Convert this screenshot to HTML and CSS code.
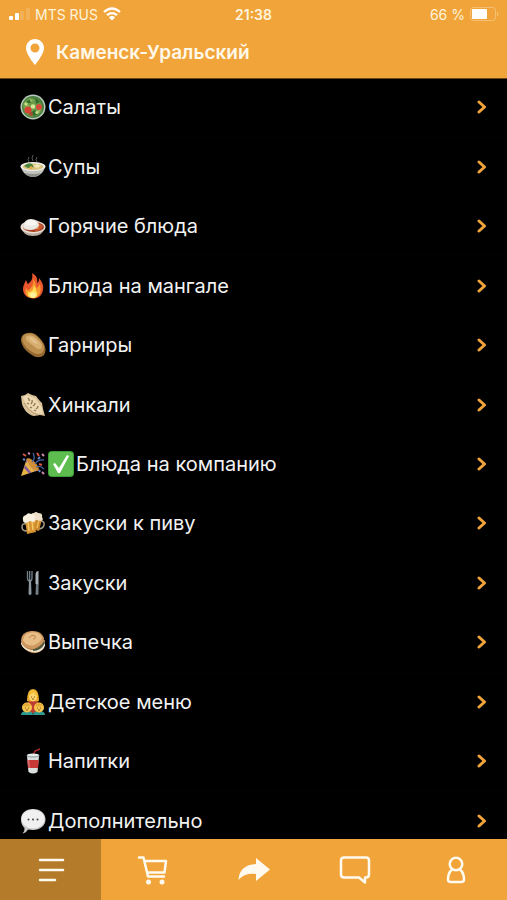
FILE: index.html
```html
<!DOCTYPE html>
<html lang="ru">
<head>
    <meta charset="UTF-8">
    <meta name="viewport" content="width=device-width, initial-scale=1.0">
    <title>Меню</title>
    <link rel="stylesheet" href="styles.css">
</head>
<body>

    <header class="header">
        <div class="status-bar">
            <div class="status-left">
                <svg class="signal-icon" viewBox="0 0 22 12">
                    <rect x="1" y="8" width="4" height="4" rx="1"></rect>
                    <rect x="7" y="5" width="4" height="7" rx="1"></rect>
                    <rect x="12" y="3" width="4" height="9" rx="1" opacity=".15"></rect>
                    <rect x="18" y="0" width="4" height="12" rx="1" opacity=".15"></rect>
                </svg>
                <span>MTS RUS</span>
                <svg class="wifi-icon" viewBox="0 0 18 14">
                    <path d="M1 5Q9-2 17 5M4 8.200Q9 4 14 8.200" fill="none" stroke="#fff" stroke-width="2.300"></path>
                    <path d="M5.800 10.300Q9 7.800 12.200 10.300L9 13.600z"></path>
                </svg>
            </div>
            <div class="status-time">21:38</div>
            <div class="status-right">
                <span>66 %</span>
                <svg class="battery-icon" viewBox="0 0 29 14">
                    <rect x=".5" y=".5" width="25" height="13" rx="3" fill="none" stroke="#fff" opacity=".3"></rect>
                    <rect x="2" y="2" width="15" height="10" rx="1"></rect>
                    <path d="M27 4.500q3 2.500 0 5z" opacity=".35"></path>
                </svg>
            </div>
        </div>
        <button type="button" class="location">
            <svg class="pin-icon" viewBox="0 0 18 26">
                <path fill-rule="evenodd" d="M9 0C4 0 0 4 0 9c0 6.500 9 17 9 17s9-10.500 9-17c0-5-4-9-9-9zm0 4.500a4.500 4.500 0 1 1 0 9 4.500 4.500 0 0 1 0-9z"></path>
            </svg>
            <span>Каменск-Уральский</span>
        </button>
    </header>

    <main class="content">
        <ul class="menu-list">
            <li>
                <a href="#salads" class="menu-item">
                    <svg class="emoji" viewBox="0 0 26 26">
                        <circle cx="13" cy="13" r="12.500" fill="#b9c9bd"></circle>
                        <circle cx="13" cy="13" r="11" fill="#4c8040"></circle>
                        <path d="M3 10q5-8 11-5l5 2q5 5 2 11-5 6-12 4-6-3-6-12z" fill="#6c9c49"></path>
                        <path d="M5 9l5-4 2 4zM15 4l5 4-4 2zM10 19l5-3 4 4-5 2z" fill="#2f6f2d"></path>
                        <path d="M9 4l4 2-2 3zM4 14l4-3 3 3zM17 16l4-1-2 4z" fill="#96b65b"></path>
                        <circle cx="8" cy="16" r="3.500" fill="#d54335"></circle>
                        <circle cx="19" cy="13" r="3" fill="#d84b3b"></circle>
                        <circle cx="11" cy="20" r="2" fill="#a84a32"></circle>
                        <circle cx="13" cy="12.500" r="2.300" fill="#d4e795"></circle>
                        <circle cx="6" cy="10" r="1.800" fill="#c5dc83"></circle>
                        <circle cx="17" cy="18.500" r="1.700" fill="#bdd685"></circle>
                    </svg>
                    <span>Салаты</span>
                    <svg class="chevron" viewBox="0 0 10 14"><path d="M2 2l5.500 5L2 12"></path></svg>
                </a>
            </li>
            <li>
                <a href="#soups" class="menu-item">
                    <svg class="emoji" viewBox="0 0 26 26">
                        <path d="M9 8q-2-2 0-5M13 7q-2-3 0-6M17 8q-2-2 0-5" fill="none" stroke="#5a5854" stroke-width="1"></path>
                        <path d="M1 12.500C2 19 8 23 13 23s11-4 12-10.500z" fill="#c4c4bf"></path>
                        <path d="M5 19q8 2 16 0-3 4-8 4t-8-4z" fill="#8f918c"></path>
                        <ellipse cx="13" cy="12.500" rx="12.500" ry="4.500" fill="#eeeeea"></ellipse>
                        <ellipse cx="13" cy="12.800" rx="10.500" ry="3.200" fill="#d9c580"></ellipse>
                        <path d="M4 12q4-4 8-2l2 3-6 1z" fill="#49843d"></path>
                        <path d="M13 12l4-2 4 2-4 2z" fill="#f1e7b4"></path>
                        <circle cx="11" cy="13.500" r="1.500" fill="#e2a548"></circle>
                    </svg>
                    <span>Супы</span>
                    <svg class="chevron" viewBox="0 0 10 14"><path d="M2 2l5.500 5L2 12"></path></svg>
                </a>
            </li>
            <li>
                <a href="#hot" class="menu-item">
                    <svg class="emoji" viewBox="0 0 26 26">
                        <path d="M1 14q2 9 12 9t12-9z" fill="#b9aba0"></path>
                        <ellipse cx="13" cy="14" rx="12.500" ry="6.500" fill="#e7ddd4"></ellipse>
                        <ellipse cx="13.500" cy="14" rx="10.500" ry="5" fill="#a63e21"></ellipse>
                        <path d="M14 10q5-1 9 3-2 5-8 5z" fill="#c7582f"></path>
                        <path d="M17 11l3 1-2 2zM15 15l4-1-1 2z" fill="#ed9b55"></path>
                        <path d="M3 14Q4 6 11 6q7 0 8 6-2 5-9 5-6 0-7-3z" fill="#e9e8e2"></path>
                        <path d="M5 11q2-4 6-4 5 0 6 4-5 3-12 0z" fill="#f8f7f2"></path>
                    </svg>
                    <span>Горячие блюда</span>
                    <svg class="chevron" viewBox="0 0 10 14"><path d="M2 2l5.500 5L2 12"></path></svg>
                </a>
            </li>
            <li>
                <a href="#grill" class="menu-item">
                    <svg class="emoji" viewBox="0 0 26 26">
                        <path d="M12 0c5 3 6 6 5 10 2-1 2-3 2-5 3 4 5 7 4 12-1 6-5 8.500-10 8.500S3 22 3 16c0-4 2-6 3-9 1 2 1 3 2 4 4-3 5-6 4-11z" fill="#e8562e"></path>
                        <path d="M13 6c4 5 2 8 4 9l3-4c2 9-1 14-7 14s-9-4-7-10c1 2 2 2 3 2 3-3 5-6 4-11z" fill="#f7992f"></path>
                        <path d="M14 13c3 3 1 5 3 6 1 4-1 6-4 6s-6-2-5-6c2 1 6-2 6-6z" fill="#ffdf56"></path>
                        <ellipse cx="13" cy="22" rx="3" ry="2.500" fill="#fff3a3"></ellipse>
                    </svg>
                    <span>Блюда на мангале</span>
                    <svg class="chevron" viewBox="0 0 10 14"><path d="M2 2l5.500 5L2 12"></path></svg>
                </a>
            </li>
            <li>
                <a href="#sides" class="menu-item">
                    <svg class="emoji" viewBox="0 0 26 26">
                        <path d="M2 4C5 0 11 0 15 2c3 2 6 5 9 10 2 4 2 8 0 11-3 3-8 3-12 0C7 20 3 16 1.500 11 .5 8 1 6 2 4z" fill="#94682f"></path>
                        <path d="M3 4c3-3 8-3 12-1 3 2 6 5 8 9 2 4 1 7-1 9-3 2-7 1-10-1C7 17 4 13 2.500 9Q2 6 3 4z" fill="#bd904f"></path>
                        <path d="M6 5c4-3 8-1 11 2 3 2 5 5 5 8 0 3-4 3-7 0L7 9Q5 7 6 5z" fill="#d6ae70"></path>
                        <path d="M9 5q5 0 9 6-1 2-4 0Q9 8 9 5z" fill="#e2bf86"></path>
                    </svg>
                    <span>Гарниры</span>
                    <svg class="chevron" viewBox="0 0 10 14"><path d="M2 2l5.500 5L2 12"></path></svg>
                </a>
            </li>
            <li>
                <a href="#khinkali" class="menu-item">
                    <svg class="emoji" viewBox="0 0 26 26">
                        <path d="M1 4l4-1 3-2 4 2 4 1 3 4 3 3 1 6 2 7-5-1-6 1c-6-1-10-6-12-12z" fill="#d8c199"></path>
                        <path d="M3 5l4-2 5 2 4 2 3 5 3 4 1 6-7-1C9 18 5 12 3 5z" fill="#ecd9b3"></path>
                        <path d="M8 6q2 2 1 3M12 8q1 2-1 4M15 11q0 2-2 3M18 14q0 2-2 3M7 11l2 1M10 15l2 1M14 18l2 1" fill="none" stroke="#8f714b" stroke-width="1.300"></path>
                        <path d="M4 11q5 9 14 12" fill="none" stroke="#b89b70" stroke-width="1"></path>
                    </svg>
                    <span>Хинкали</span>
                    <svg class="chevron" viewBox="0 0 10 14"><path d="M2 2l5.500 5L2 12"></path></svg>
                </a>
            </li>
            <li>
                <a href="#company" class="menu-item">
                    <svg class="emoji" viewBox="0 0 26 26">
                        <path d="M7 7L1 25l18-6z" fill="#e8b545"></path>
                        <path d="M6 11l9 9.500 3-1L7 8zM4 17l5 5.500 2.500-1L5 14z" fill="#8a5ca0"></path>
                        <path d="M7 12l8 8 2-1-9-10z" fill="#f2c961"></path>
                        <ellipse cx="13" cy="13.500" rx="3" ry="8" transform="rotate(-42 13 13.500)" fill="#d18e35"></ellipse>
                        <path d="M12 11q4-4 1-9M15 13q3-5 9-4M16 16q4-2 8 2" fill="none" stroke="#3f66a8" stroke-width="1.300"></path>
                        <path d="M17 2l2 3M3 3l3 2M19 13l3 1" stroke="#d85443" stroke-width="2"></path>
                        <path d="M22 3l2 2M8 2l2 1M22 21l2 2" stroke="#c98aae" stroke-width="2"></path>
                        <path d="M3 8l2 1M18 8l2-2M19 19l1 2" stroke="#6985c8" stroke-width="2"></path>
                    </svg>
                    <svg class="emoji" viewBox="0 0 26 26">
                        <rect x="0" y="0" width="26" height="26" rx="4" fill="#3d9f38"></rect>
                        <rect x="1" y="1" width="24" height="24" rx="3" fill="#5dbd4f"></rect>
                        <path d="M5 13l2-1 4 5L19 4l2 1-9 17h-2z" fill="#fff"></path>
                    </svg>
                    <span>Блюда на компанию</span>
                    <svg class="chevron" viewBox="0 0 10 14"><path d="M2 2l5.500 5L2 12"></path></svg>
                </a>
            </li>
            <li>
                <a href="#beer-snacks" class="menu-item">
                    <svg class="emoji" viewBox="0 0 26 26">
                        <path d="M20 11q5 0 4 4-1 4-6 4M6 14q-4-1-4 3 0 4 5 4" fill="none" stroke="#a89c89" stroke-width="1.500"></path>
                        <path d="M13 7l9 2-3 12-7-2z" fill="#c98629"></path>
                        <path d="M15 9l-1 9M19 10l-2 8" stroke="#f2bc56" stroke-width="1.500"></path>
                        <path d="M11 7q-1-4 3-4 2-2 4 0 5 0 4 4 2 3-1 4L11 9z" fill="#eee0c8"></path>
                        <path d="M5 10l9-1 2 13-9 2z" fill="#d79332"></path>
                        <path d="M8 12l1 9M12 11l1 9" stroke="#f6c866" stroke-width="1.500"></path>
                        <path d="M3 10q-1-4 3-5 2-3 5-1 4 0 4 4 1 4-2 4l-3-1-4 2q-3 0-3-3z" fill="#f7efdf"></path>
                    </svg>
                    <span>Закуски к пиву</span>
                    <svg class="chevron" viewBox="0 0 10 14"><path d="M2 2l5.500 5L2 12"></path></svg>
                </a>
            </li>
            <li>
                <a href="#snacks" class="menu-item">
                    <svg class="emoji" viewBox="0 0 26 26">
                        <path d="M7.500 1v7q0 3 2.200 3Q12 11 12 8V1M9.700 1v9" fill="none" stroke="#73818b" stroke-width="1.300"></path>
                        <path d="M9 10h2l.500 14q-1.500 2-3 0z" fill="#8b969d"></path>
                        <path d="M15.500 14V5q0-4 3-4v14z" fill="#a9b1b7"></path>
                        <path d="M16 14h2.500v10q-1.500 2-3 0z" fill="#737d85"></path>
                    </svg>
                    <span>Закуски</span>
                    <svg class="chevron" viewBox="0 0 10 14"><path d="M2 2l5.500 5L2 12"></path></svg>
                </a>
            </li>
            <li>
                <a href="#bakery" class="menu-item">
                    <svg class="emoji" viewBox="0 0 26 26">
                        <path d="M2 14q2 8 10 10 8 1 12-5l1-8z" fill="#b47b42"></path>
                        <path d="M1 12q2 7 10 9 9 1 14-9v5q-4 8-13 6Q3 21 1 15z" fill="#f0e6d2"></path>
                        <path d="M13 20q7-1 11-8l1 2q-4 8-12 8z" fill="#4e583b"></path>
                        <path d="M1 12Q1 3 11 2q10-1 13 7 1 6-10 11Q3 20 1 12z" fill="#cf9860"></path>
                        <path d="M3 11Q4 4 11 3.500q8-1 11 5-1 5-9 8-8 0-10-5.500z" fill="#e8bd86"></path>
                        <path d="M9 9q3-4 6-2 1 3-2 3" fill="none" stroke="#c68d57" stroke-width="1.200"></path>
                    </svg>
                    <span>Выпечка</span>
                    <svg class="chevron" viewBox="0 0 10 14"><path d="M2 2l5.500 5L2 12"></path></svg>
                </a>
            </li>
            <li>
                <a href="#kids" class="menu-item">
                    <svg class="emoji" viewBox="0 0 26 26">
                        <path d="M7 12Q7 0 13 0t6 12l-3 1h-6z" fill="#e7a92b"></path>
                        <path d="M5 19q0-7 8-7t8 7v5H5z" fill="#c03b32"></path>
                        <ellipse cx="13" cy="7.500" rx="4" ry="5" fill="#ffd56b"></ellipse>
                        <path d="M9 6q3 0 5-3 0 3 4 4-1-6-5-6T9 6z" fill="#f2bd38"></path>
                        <path d="M1 26q0-4 6-4t6 4zM13 26q0-4 6-4t6 4z" fill="#329b91"></path>
                        <circle cx="7" cy="18.500" r="5" fill="#f5c44d"></circle>
                        <circle cx="19" cy="18.500" r="5" fill="#f5c44d"></circle>
                        <path d="M3 17q2-5 8-1-2 2-8 1zM15 17q2-5 8-1-2 2-8 1z" fill="#e5a936"></path>
                        <path d="M5 19h1M8 19h1M6 21h2M17 19h1M20 19h1M18 21h2M11 8h1M14 8h1M12 10h2" stroke="#8b5824" stroke-width="1"></path>
                    </svg>
                    <span>Детское меню</span>
                    <svg class="chevron" viewBox="0 0 10 14"><path d="M2 2l5.500 5L2 12"></path></svg>
                </a>
            </li>
            <li>
                <a href="#drinks" class="menu-item">
                    <svg class="emoji" viewBox="0 0 26 26">
                        <path d="M13 7l2-4 5-2" fill="none" stroke="#a92a2e" stroke-width="1.500"></path>
                        <path d="M7 8h12l-1.500 16q-4.500 3-9 0z" fill="#d9dddd"></path>
                        <path d="M7.300 12h11.400l-.700 8H8z" fill="#c83837"></path>
                        <path d="M8.500 10l1 14" stroke="#fff" stroke-width="1" opacity=".4"></path>
                        <ellipse cx="13" cy="7.500" rx="6.500" ry="2" fill="#9ca5a7"></ellipse>
                        <ellipse cx="13" cy="7" rx="5.500" ry="1.300" fill="#e8eceb"></ellipse>
                    </svg>
                    <span>Напитки</span>
                    <svg class="chevron" viewBox="0 0 10 14"><path d="M2 2l5.500 5L2 12"></path></svg>
                </a>
            </li>
            <li>
                <a href="#extra" class="menu-item">
                    <svg class="emoji" viewBox="0 0 26 26">
                        <path d="M13 1c7.500 0 12.500 4.500 12.500 10.500S20 22 13 22l-5-.500Q6 25 2.500 25.500 5 23 4.500 20 1 17 1 11.500C1 5.500 5.500 1 13 1z" fill="#c9c9c9"></path>
                        <ellipse cx="13" cy="11" rx="11.500" ry="9.500" fill="#f0f0f0"></ellipse>
                        <g fill="#444">
                            <circle cx="8.500" cy="11.500" r="1"></circle>
                            <circle cx="13" cy="11.500" r="1"></circle>
                            <circle cx="17.500" cy="11.500" r="1"></circle>
                        </g>
                    </svg>
                    <span>Дополнительно</span>
                    <svg class="chevron" viewBox="0 0 10 14"><path d="M2 2l5.500 5L2 12"></path></svg>
                </a>
            </li>
        </ul>
    </main>

    <nav class="tab-bar">
        <a href="#menu" class="tab active" aria-label="Меню">
            <svg class="tab-icon" viewBox="0 0 32 32">
                <path d="M5 6h23M5 16h23M5 26h15"></path>
            </svg>
        </a>
        <a href="#cart" class="tab" aria-label="Корзина">
            <svg class="tab-icon" viewBox="0 0 32 32">
                <path d="M3 3.500h4.500l4.500 19h16M8.500 7h21.500l-1.500 11.500H11"></path>
                <circle cx="12.500" cy="28" r="2.500" class="solid"></circle>
                <circle cx="26" cy="28" r="2.500" class="solid"></circle>
            </svg>
        </a>
        <a href="#share" class="tab" aria-label="Поделиться">
            <svg class="tab-icon" viewBox="0 0 32 32">
                <path class="solid" d="M18 4l14 11.500L18 27v-7C9 19 4 22 .500 26 1 16 7 10.500 18 10z"></path>
            </svg>
        </a>
        <a href="#chat" class="tab" aria-label="Сообщения">
            <svg class="tab-icon" viewBox="0 0 32 32">
                <path d="M5 3.500h22q3 0 3 3v14q0 3-3 3h-1v5l-6-5H5q-3 0-3-3v-14q0-3 3-3z"></path>
            </svg>
        </a>
        <a href="#profile" class="tab" aria-label="Профиль">
            <svg class="tab-icon" viewBox="0 0 32 32">
                <circle cx="16" cy="10" r="6.300"></circle>
                <path d="M12 15.500C9 18 8 22 8 25.500q0 2.500 3 2.500h10q3 0 3-2.500c0-3.500-1-7.500-4-10"></path>
            </svg>
        </a>
    </nav>

</body>
</html>
```

FILE: styles.css
```css
* {
    box-sizing: border-box;
}

body {
    display: flex;
    flex-direction: column;
    height: 100vh;
    margin: 0;
    background-color: #000;
    color: #f2f2f2;
    font-family: Inter, Roboto, "Liberation Sans", sans-serif;
}

a {
    color: inherit;
    text-decoration: none;
}

svg {
    display: block;
    flex-shrink: 0;
}

/* Header */
.header {
    background-color: #f0a43a;
    border-bottom: 1px solid #6b4717;
    color: #fff4dc;
    fill: #fff;
}

.status-bar {
    display: grid;
    grid-template-columns: 1fr auto 1fr;
    align-items: center;
    height: 28px;
    padding: 0 8px;
    font-size: 14px;
}

.status-left,
.status-right {
    display: flex;
    align-items: center;
    gap: 5px;
}

.status-right {
    justify-content: flex-end;
}

.status-time {
    font-weight: 600;
}

.signal-icon {
    width: 22px;
    height: 12px;
}

.wifi-icon {
    width: 18px;
    height: 14px;
}

.battery-icon {
    width: 29px;
    height: 14px;
}

.location {
    display: flex;
    align-items: center;
    gap: 12px;
    width: 100%;
    height: 50px;
    padding: 0 26px 2px;
    border: none;
    background: none;
    color: #fff8e8;
    font-family: inherit;
    font-size: 19px;
    font-weight: 600;
    cursor: pointer;
}

.pin-icon {
    width: 18px;
    height: 26px;
    fill: #fff;
}

/* Menu list, slightly scrolled under both bars */
.content {
    display: flex;
    flex: 1;
    flex-direction: column;
    min-height: 0;
    overflow: hidden;
}

.menu-list {
    display: grid;
    flex: 1;
    grid-auto-rows: 1fr;
    margin: -1px 0 -12px;
    padding: 0;
    list-style: none;
}

.menu-item {
    display: flex;
    align-items: center;
    gap: 2px;
    height: 100%;
    padding: 0 20px;
    border-bottom: 1px solid #020202;
    font-size: 20px;
    line-height: 24px;
}

.emoji {
    width: 26px;
    height: 26px;
}

.chevron {
    width: 10px;
    height: 14px;
    margin-left: auto;
    fill: none;
    stroke: #f0a43a;
    stroke-width: 3;
    stroke-linecap: round;
    stroke-linejoin: round;
}

/* Bottom tabs */
.tab-bar {
    display: flex;
    height: 61px;
    background-color: #f0a43a;
}

.tab {
    display: flex;
    flex: 1;
    align-items: center;
    justify-content: center;
}

.tab.active {
    background-color: #b47c2a;
}

.tab-icon {
    width: 32px;
    height: 32px;
    fill: none;
    stroke: #fffaf0;
    stroke-width: 2.5;
    stroke-linecap: round;
    stroke-linejoin: round;
}

.tab-icon .solid {
    fill: #fffaf0;
    stroke: none;
}
```
